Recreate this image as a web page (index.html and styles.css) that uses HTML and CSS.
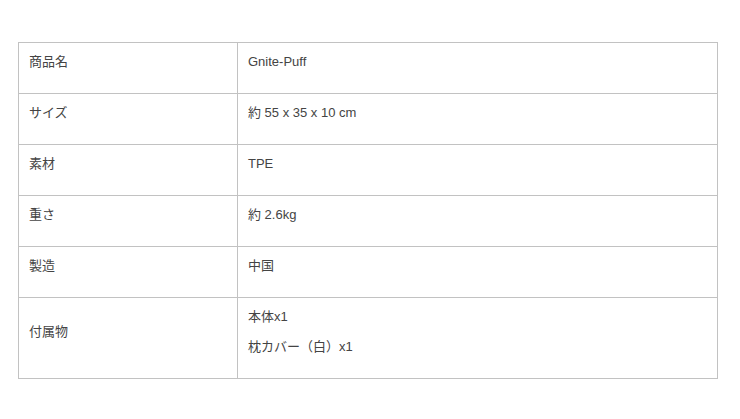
FILE: index.html
```html
<!DOCTYPE html>
<html lang="ja">
<head>
<meta charset="utf-8">
<link rel="stylesheet" href="styles.css">
</head>
<body>
<div class="wrap">
<table class="spec">
  <tbody>
    <tr><th class="label"><p>商品名</p></th><td class="value"><p>Gnite-Puff</p></td></tr>
    <tr><th class="label"><p>サイズ</p></th><td class="value"><p>約 55 x 35 x 10 cm</p></td></tr>
    <tr><th class="label"><p>素材</p></th><td class="value"><p>TPE</p></td></tr>
    <tr><th class="label"><p>重さ</p></th><td class="value"><p>約 2.6kg</p></td></tr>
    <tr><th class="label"><p>製造</p></th><td class="value"><p>中国</p></td></tr>
    <tr><th class="label"><p>付属物</p></th><td class="value"><p>本体x1</p><p>枕カバー（白）x1</p></td></tr>
  </tbody>
</table>
</div>
</body>
</html>
```

FILE: styles.css
```css
html, body {
  margin: 0;
  padding: 0;
  background: #ffffff;
}
.wrap {
  padding: 42px 0 0 18px;
}
.spec {
  border-collapse: collapse;
  width: 700px;
  table-layout: fixed;
  font-family: "Liberation Sans", Arial, "Noto Sans CJK JP", sans-serif;
  font-size: 13px;
  color: #444444;
}
.spec th, .spec td {
  border: 1px solid #c2c2c2;
  padding: 10px 10px 10px 10px;
  vertical-align: middle;
  text-align: left;
  font-weight: normal;
}
.spec .label {
  width: 219px;
  box-sizing: border-box;
}
.spec p {
  margin: 0 0 12px 0;
  line-height: 18px;
}
```
